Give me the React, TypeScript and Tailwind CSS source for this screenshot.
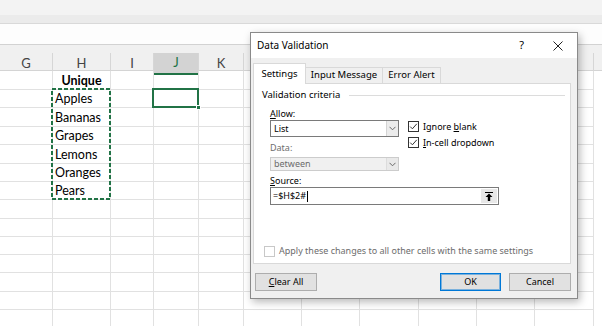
import type { ReactNode } from 'react';

const COLS = ['G', 'H', 'I', 'J', 'K', 'L', 'M', 'N', 'O', 'P', 'Q'];
// columns from L on sit behind the dialog, their letters are never seen
const SHOWN = ['G', 'H', 'I', 'J', 'K'];
const FRUITS = ['Apples', 'Bananas', 'Grapes', 'Lemons', 'Oranges', 'Pears'];
const ROWS = 14;
const GRID_COLS = 'grid-cols-[53px_58px_43px_45px_45px_58px_58px_59px_58px_58px_59px]';

function Chevron() {
  return (
    <svg width="7" height="5" viewBox="0 0 7 5">
      <path d="M0.5 0.8 L3.5 3.8 L6.5 0.8" fill="none" stroke="#6a6a6a" strokeWidth="1" />
    </svg>
  );
}

function Check({ checked, disabled }: { checked?: boolean; disabled?: boolean }) {
  return (
    <span
      className={`flex h-[11px] w-[11px] shrink-0 items-center justify-center border bg-white ${
        disabled ? 'border-[#c8c8c8]' : 'border-[#333333]'
      }`}
    >
      {checked && (
        <svg width="9" height="9" viewBox="0 0 9 9">
          <path d="M1.2 4.6 L3.4 6.8 L7.8 1.8" fill="none" stroke="#333333" strokeWidth="1" />
        </svg>
      )}
    </span>
  );
}

function Btn({ children, primary }: { children: ReactNode; primary?: boolean }) {
  return (
    <div
      className={`flex h-[18px] items-center justify-center border bg-[#e1e1e1] text-black ${
        primary ? 'border-[#0078d7] shadow-[inset_0_0_0_1px_rgba(0,120,215,0.45)]' : 'border-[#adadad]'
      }`}
    >
      {children}
    </div>
  );
}

function Sheet() {
  return (
    <div className="font-['Lato',sans-serif] text-[12.5px] text-black">
      <div className="h-[15px] bg-[#f3f3f3]" />
      <div className="h-[9px] border-b border-[#d9d9d9] bg-[#ebebeb]" />
      <div className="h-[21px] border-b border-[#d2d2d2] bg-[#fdfdfd]" />
      {/* column headers */}
      <div className={`grid h-[26px] border-b border-[#d4d4d4] bg-[#f0f0f0] text-[13px] ${GRID_COLS}`}>
        {COLS.map((c) => (
          <div key={c} className="flex flex-col">
            <div className="h-[8px]" />
            <div
              className={`flex flex-1 items-center justify-center border-r border-[#d6d6d6] text-[#444] ${
                c === 'J' ? 'border-b-2 border-b-[#217346] bg-[#d3d3d3] text-[#217346]' : ''
              }`}
            >
              {SHOWN.includes(c) ? c : null}
            </div>
          </div>
        ))}
      </div>
      {/* cells */}
      <div className="relative">
        <div
          className={`grid ${GRID_COLS} grid-rows-[19px_18px_19px_18px_19px_18px_18px_19px_18px_18px_18px_19px_18px_18px]`}
        >
          {Array.from({ length: ROWS }).flatMap((_, r) =>
            COLS.map((c) => {
              let content: ReactNode = null;
              if (c === 'H' && r === 0) content = <span className="w-full text-center font-bold">Unique</span>;
              if (c === 'H' && r >= 1 && r <= 6) content = <span className="pl-[2px]">{FRUITS[r - 1]}</span>;
              return (
                <div
                  key={`${c}${r}`}
                  className="flex items-center border-r border-b border-[#e1e1e1] pt-[2px] leading-none"
                >
                  {content}
                </div>
              );
            })
          )}
        </div>
        {/* copy marquee around H2:H7 */}
        <svg className="absolute left-[51px] top-[17px]" width="60" height="112" viewBox="0 0 60 112">
          <rect x="1" y="1" width="58" height="110" fill="none" stroke="#217346" strokeWidth="2" strokeDasharray="4 2" />
        </svg>
        {/* active cell J2 */}
        <div className="absolute left-[152px] top-[17px] h-[20px] w-[47px] border-2 border-[#217346]" />
        <div className="absolute left-[196px] top-[34px] h-[5px] w-[5px] border border-white bg-[#217346]" />
      </div>
    </div>
  );
}

function Dialog() {
  return (
    <div className="absolute left-[250px] top-[32px] flex h-[267px] w-[328px] flex-col border border-[#8a8a8a] bg-[#f0f0f0] font-['Noto_Sans',sans-serif] text-[9px] text-black shadow-[2px_3px_8px_rgba(0,0,0,0.28)]">
      {/* title bar */}
      <div className="flex h-[25px] items-center bg-white pl-[6px] pr-[14px]">
        <span className="text-[10px]">Data Validation</span>
        <span className="ml-auto text-[11px]">?</span>
        <svg className="ml-[29px]" width="10" height="10" viewBox="0 0 10 10">
          <path d="M0.5 0.5 L9.5 9.5 M9.5 0.5 L0.5 9.5" stroke="#222" strokeWidth="1" />
        </svg>
      </div>
      {/* tabs */}
      <div className="flex h-[25px] items-end pl-[2px]">
        <div className="relative z-10 -mb-px flex h-[21px] w-[53px] items-center justify-center border border-b-0 border-[#d9d9d9] bg-white text-[9.5px]">
          Settings
        </div>
        <div className="flex h-[16px] w-[77px] items-center justify-center border border-b-0 border-l-0 border-[#d9d9d9] text-[9.5px]">
          Input Message
        </div>
        <div className="flex h-[16px] w-[58px] items-center justify-center border border-b-0 border-l-0 border-[#d9d9d9] text-[9.5px]">
          Error Alert
        </div>
      </div>
      {/* panel */}
      <div className="ml-[2px] flex h-[181px] w-[318px] flex-col border border-[#d9d9d9] bg-white pl-[8px] pt-[5px]">
        <div className="flex h-[13px] items-center">
          <span className="text-[9.5px]">Validation criteria</span>
          <span className="ml-[9px] mr-[5px] h-px flex-1 bg-[#dcdcdc]" />
        </div>
        <div className="flex flex-col pl-[8px]">
          <div className="mt-[5px] h-[13px] leading-[13px]">
            <u>A</u>llow:
          </div>
          <div className="flex h-[17px] items-start">
            <div className="flex h-[17px] w-[129px] shrink-0 border border-[#7a7a7a] bg-white">
              <span className="flex-1 pl-[3px] leading-[15px]">List</span>
              <span className="flex w-[12px] items-center justify-center border-l border-[#d4d4d4] bg-[#ececec]">
                <Chevron />
              </span>
            </div>
            <div className="ml-[9px] mt-[1px] flex flex-col gap-[5px]">
              <div className="flex h-[11px] items-center gap-[4px]">
                <Check checked />
                <span>
                  Ignore <u>b</u>lank
                </span>
              </div>
              <div className="flex h-[11px] items-center gap-[4px]">
                <Check checked />
                <span>
                  <u>I</u>n-cell dropdown
                </span>
              </div>
            </div>
          </div>
          <div className="mt-[4px] h-[13px] leading-[13px] text-[#6d6d6d]">Data:</div>
          <div className="mt-[3px] flex h-[14px] w-[129px] border border-[#cccccc] bg-[#f0f0f0]">
            <span className="flex-1 pl-[3px] leading-[12px] text-[#6d6d6d]">between</span>
            <span className="flex w-[12px] items-center justify-center border-l border-[#dcdcdc] bg-[#e9e9e9]">
              <Chevron />
            </span>
          </div>
          <div className="mt-[3px] h-[13px] leading-[13px]">
            <u>S</u>ource:
          </div>
          <div className="flex h-[18px] w-[229px] items-center border border-[#7a7a7a] bg-white">
            <span className="pl-[2px]">=$H$2#</span>
            <span className="ml-px h-[11px] w-px bg-black" />
            <span className="ml-auto mr-px flex h-[14px] w-[16px] items-center justify-center bg-[#e8e8e8]">
              <svg width="8" height="9" viewBox="0 0 8 9">
                <path d="M0 0.5 H8" stroke="#000" strokeWidth="1" />
                <path d="M4 1.5 L7.5 5 H5.2 V9 H2.8 V5 H0.5 Z" fill="#000" />
              </svg>
            </span>
          </div>
        </div>
        <div className="mb-[6px] mt-auto flex h-[12px] items-center gap-[4px] pl-[2px] text-[#6d6d6d]">
          <Check disabled />
          <span>Apply these changes to all other cells with the same settings</span>
        </div>
      </div>
      {/* buttons */}
      <div className="mt-[9px] flex pl-[4px] pr-[6px]">
        <div className="w-[62px]">
          <Btn>
            <u>C</u>lear All
          </Btn>
        </div>
        <div className="ml-auto w-[61px]">
          <Btn primary>OK</Btn>
        </div>
        <div className="ml-[8px] w-[62px]">
          <Btn>Cancel</Btn>
        </div>
      </div>
    </div>
  );
}

export default function App() {
  return (
    <div className="relative h-[326px] w-[602px] overflow-hidden bg-white">
      <Sheet />
      <Dialog />
    </div>
  );
}
